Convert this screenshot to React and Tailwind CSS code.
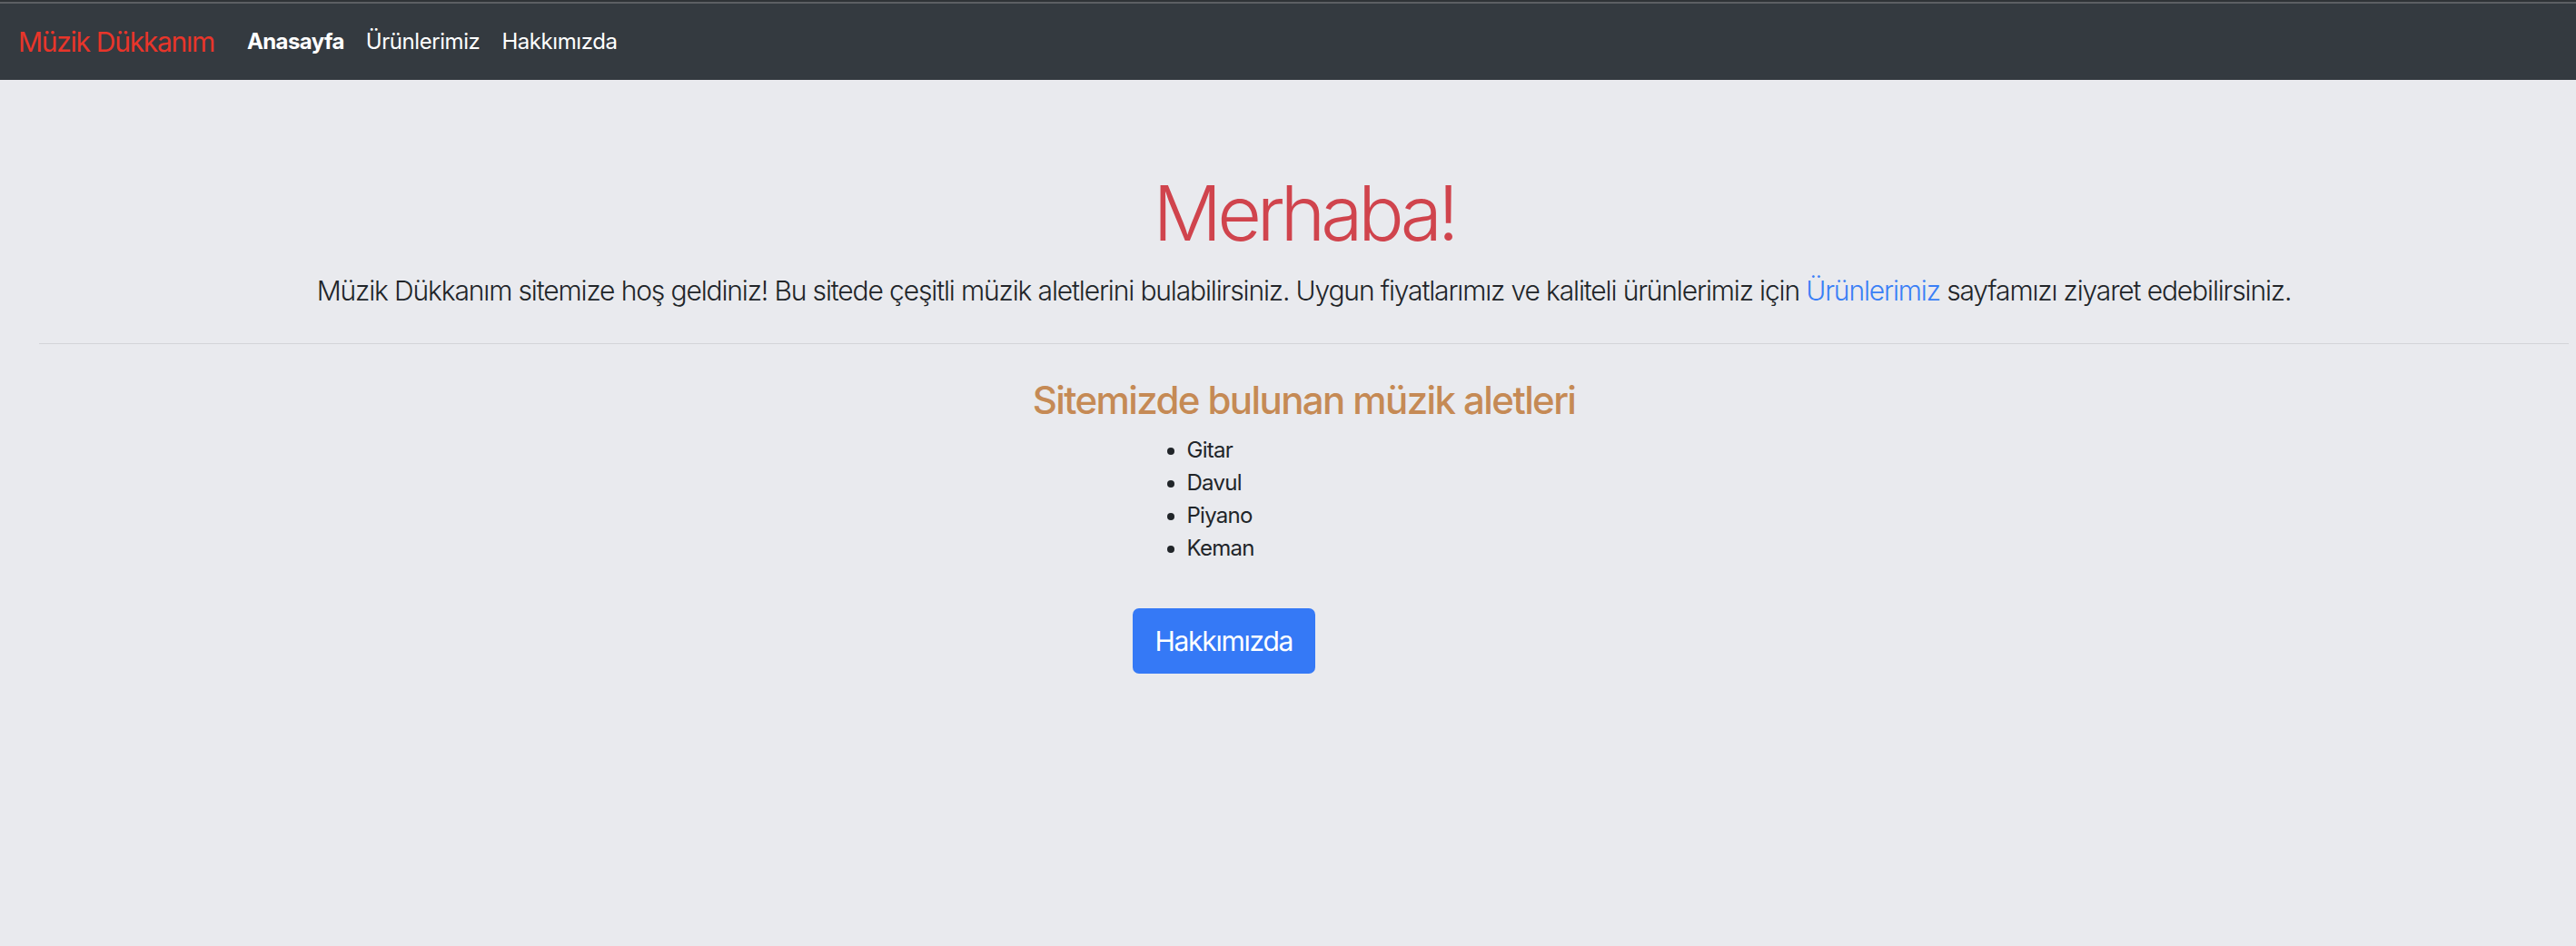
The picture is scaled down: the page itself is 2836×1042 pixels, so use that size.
export default function App() {
  const items = ['Gitar', 'Davul', 'Piyano', 'Keman'];

  return (
    <div className="min-h-screen bg-[#e9eaee] text-[#212529] font-['Inter','Noto_Sans',sans-serif]">
      {/* top strip */}
      <div className="h-[2px] bg-[#2f3337]" />
      <div className="h-[2px] bg-[#5c5f63]" />

      <nav className="flex items-center h-[84px] bg-[#343a40] pl-[20px]">
        <a href="#" className="text-[30px] leading-[45px] tracking-[-0.043em] text-[#e8352a] mr-[24px]">
          Müzik Dükkanım
        </a>
        <ul className="flex items-center">
          <li>
            <a href="#" className="block px-[12px] text-[24px] leading-[36px] tracking-[-0.025em] font-bold text-white">
              Anasayfa
            </a>
          </li>
          <li>
            <a href="#" className="block px-[12px] text-[24px] leading-[36px] tracking-[-0.018em] text-white">
              Ürünlerimiz
            </a>
          </li>
          <li>
            <a href="#" className="block px-[12px] text-[24px] leading-[36px] tracking-[-0.018em] text-white">
              Hakkımızda
            </a>
          </li>
        </ul>
      </nav>

      <main className="ml-[43px] mr-[8px]">
        <div className="pt-[97px] text-center">
          <h1 className="text-[84px] leading-[1.2] tracking-[-0.06em] font-light text-[#d0444d] mb-[12px]">
            Merhaba!
          </h1>
          <p className="text-[30px] leading-[45px] tracking-[-0.038em] font-light">
            Müzik Dükkanım sitemize hoş geldiniz! Bu sitede çeşitli müzik aletlerini bulabilirsiniz. Uygun
            fiyatlarımız ve kaliteli ürünlerimiz için{' '}
            <a href="#" className="text-[#3a7ff6]">
              Ürünlerimiz
            </a>{' '}
            sayfamızı ziyaret edebilirsiniz.
          </p>
        </div>

        <hr className="mt-[35px] border-0 border-t-[1.5px] border-[#d3d4d8]" />

        <section className="mt-[37px] text-center">
          <h3 className="text-[42px] leading-[1.2] tracking-[-0.038em] font-medium text-[#c58a55] mb-[12px]">
            Sitemizde bulunan müzik aletleri
          </h3>
          <div className="mx-auto w-[378px] text-left">
            <ul className="list-disc pl-[60px] text-[24px] leading-[36px] tracking-[-0.03em]">
              {items.map((item) => (
                <li key={item}>{item}</li>
              ))}
            </ul>
            <button className="mt-[48px] h-[72px] px-[25px] rounded-[7px] bg-[#3579f6] text-white text-[30px] tracking-[-0.042em]">
              Hakkımızda
            </button>
          </div>
        </section>
      </main>
    </div>
  );
}
